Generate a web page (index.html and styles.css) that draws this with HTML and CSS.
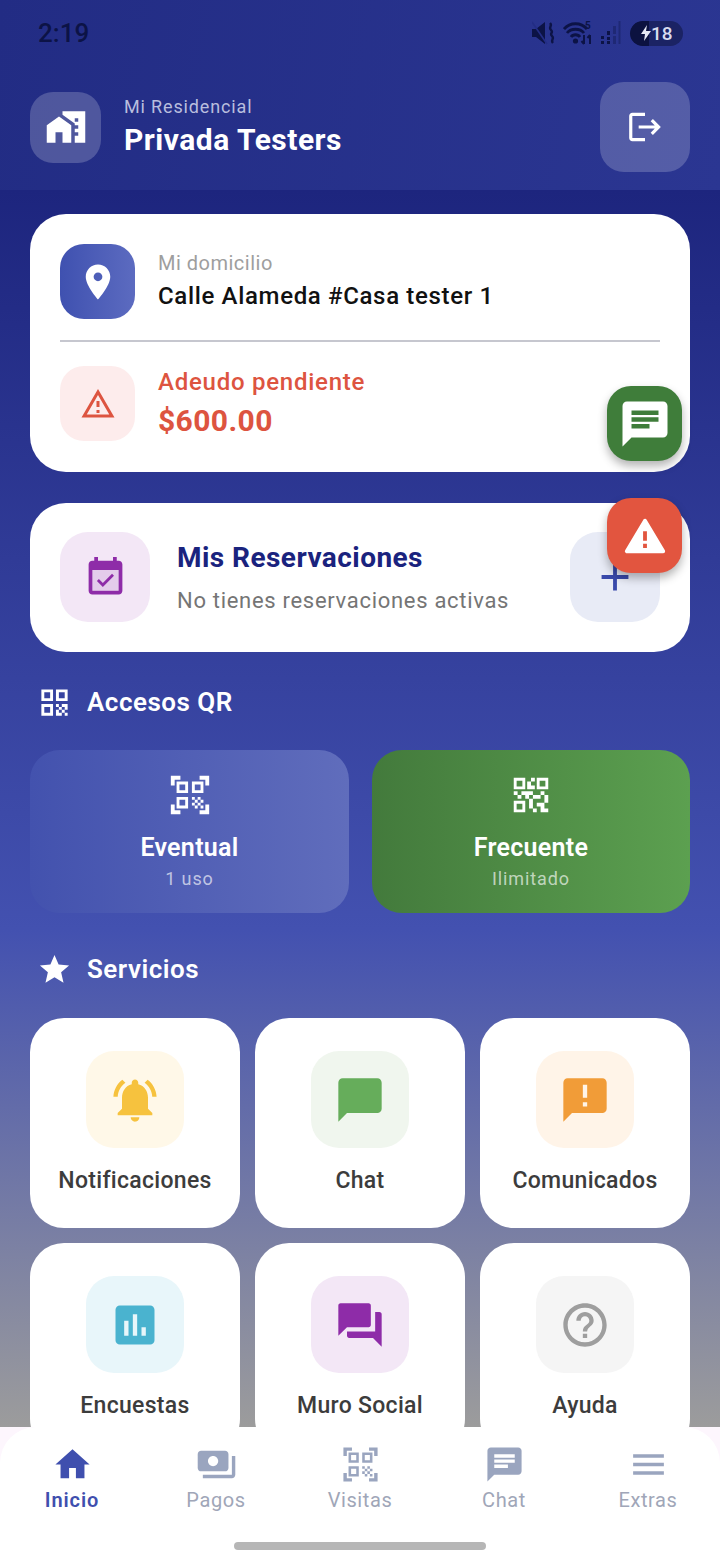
FILE: index.html
```html
<!DOCTYPE html>
<html lang="es">
<head>
<meta charset="UTF-8">
<meta name="viewport" content="width=device-width, initial-scale=1.0">
<title>Mi Residencial</title>
<link rel="stylesheet" href="styles.css">
</head>
<body>

<div class="app">

<header class="top">
  <div class="statusbar">
    <span class="clock">2:19</span>
    <div class="status-icons">
      <svg class="st-mute" viewBox="0 0 25 24"><path d="M0 8h4l9-7v22l-9-7H0z"/><path d="M0 1l15 22" stroke="#232d85" stroke-width="1.600"/><path d="M18 2c3 3-2 4 1 7s-2 3 1 6-2 4 1 7" fill="none" stroke="#0c1346" stroke-width="2.400"/></svg>
      <svg class="st-wifi" viewBox="0 0 29 24"><path d="M1 8c6-7 17-7 23 0M4 12c4-5 13-5 17 0M8 16c2-3 7-3 9 0" fill="none" stroke="#0c1346" stroke-width="2.800"/><circle cx="12.500" cy="20" r="2.600" fill="#0c1346"/><path d="M21 14v9M18.500 20l2.500 3M27 23v-9M24.500 17l2.500-3" fill="none" stroke="#0c1346" stroke-width="2"/></svg>
      <span class="st-five">5</span>
      <svg class="st-signal" viewBox="0 0 21 24"><path d="M1 15h3v3H1zM1 20h3v3H1zM7 10h3v4H7zM7 16h3v3H7zM7 20h3v3H7z"/><path class="dim" d="M13 5h3v8h-3zM13 15h3v8h-3zM18.500 0h2v23h-2z"/></svg>
      <div class="battery"><span class="bat-cap"><svg viewBox="0 0 12 18"><path d="M7 1L1 10h4l-1 7 7-10H6z"/></svg></span><span>18</span></div>
    </div>
  </div>
  <div class="top-row">
    <div class="top-left">
      <div class="logo-box">
        <svg class="ic-42" viewBox="0 0 24 24"><path d="M1 11v10h5v-6h4v6h5V11L8 6z"/><path d="M10 3v1.970l7 5V11h2v2h-2v2h2v2h-2v4h6V3H10zm9 6h-2V7h2v2z"/></svg>
      </div>
      <div>
        <div class="top-small">Mi Residencial</div>
        <div class="top-name">Privada Testers</div>
      </div>
    </div>
    <button class="logout">
      <svg class="ic-38" viewBox="0 0 24 24"><path d="M17 7l-1.410 1.410L18.170 11H8v2h10.170l-2.580 2.580L17 17l5-5zM4 5h8V3H4c-1.100 0-2 .9-2 2v14c0 1.100.9 2 2 2h8v-2H4V5z"/></svg>
    </button>
  </div>
</header>

<main class="content">

  <section class="card home-card">
    <div class="home-row">
      <div class="box-75 box-blue">
        <svg class="ic-42 white" viewBox="0 0 24 24"><path d="M12 2C8.130 2 5 5.130 5 9c0 5.250 7 13 7 13s7-7.750 7-13c0-3.870-3.130-7-7-7zm0 9.500a2.500 2.500 0 0 1 0-5 2.500 2.500 0 0 1 0 5z"/></svg>
      </div>
      <div>
        <div class="label-grey">Mi domicilio</div>
        <div class="address">Calle Alameda #Casa tester 1</div>
      </div>
    </div>
    <div class="divider"></div>
    <div class="home-row">
      <div class="box-75 box-red">
        <svg class="ic-36" viewBox="0 0 24 24"><path d="M12 5.990L19.530 19H4.470L12 5.990M12 2L1 21h22L12 2zm1 14h-2v2h2v-2zm0-6h-2v4h2v-4z"/></svg>
      </div>
      <div>
        <div class="debt-label">Adeudo pendiente</div>
        <div class="debt-amount">$600.00</div>
      </div>
    </div>
  </section>

  <section class="card booking-card">
    <div class="box-90 box-purple">
      <svg class="ic-45" viewBox="0 0 24 24"><path fill-rule="evenodd" d="M19 3h-1V1h-2v2H8V1H6v2H5c-1.110 0-2 .9-2 2v14c0 1.100.89 2 2 2h14c1.100 0 2-.9 2-2V5c0-1.100-.9-2-2-2zm0 16H5V8h14v11z"/><path d="M5 8h14v11H5z" opacity=".14"/><path d="M16.530 11.060L15.470 10l-4.880 4.880-2.120-2.120-1.060 1.060 3.180 3.180z"/></svg>
    </div>
    <div class="booking-text">
      <div class="booking-title">Mis Reservaciones</div>
      <div class="booking-sub">No tienes reservaciones activas</div>
    </div>
    <div class="box-90 box-add">
      <svg class="ic-46" viewBox="0 0 24 24"><path d="M19 13h-6v6h-2v-6H5v-2h6V5h2v6h6v2z"/></svg>
    </div>
  </section>

  <h2 class="section-title title-qr">
    <svg class="ic-35" viewBox="0 0 24 24"><path d="M3 11h8V3H3v8zm2-6h4v4H5V5zM3 21h8v-8H3v8zm2-6h4v4H5v-4zM13 3v8h8V3h-8zm6 6h-4V5h4v4zM13 13h2v2h-2zM15 15h2v2h-2zM13 17h2v2h-2zM17 13h2v2h-2zM19 15h2v2h-2zM15 19h2v2h-2zM17 17h2v2h-2zM19 19h2v2h-2zM13 19h2v2h-2zM19 13h2v2h-2z"/></svg>
    Accesos QR
  </h2>

  <div class="qr-row">
    <div class="qr-card qr-blue">
      <svg class="ic-46" viewBox="0 0 24 24"><path d="M9.500 6.500v3h-3v-3h3M11 5H5v6h6V5zm-1.500 9.500v3h-3v-3h3M11 13H5v6h6v-6zm6.500-6.500v3h-3v-3h3M19 5h-6v6h6V5zm-6 8h1.500v1.500H13V13zm1.500 1.500H16V16h-1.500v-1.500zM16 13h1.500v1.500H16V13zm-3 3h1.500v1.500H13V16zm1.500 1.500H16V19h-1.500v-1.500zM16 16h1.500v1.500H16V16zm1.500-1.500H19V16h-1.500v-1.500zm0 3H19V19h-1.500v-1.500zM22 7h-2V4h-3V2h5v5zm0 15v-5h-2v3h-3v2h5zM2 22h5v-2H4v-3H2v5zM2 2v5h2V4h3V2H2z"/></svg>
      <div class="qr-title">Eventual</div>
      <div class="qr-sub">1 uso</div>
    </div>
    <div class="qr-card qr-green">
      <svg class="ic-46" viewBox="0 0 24 24"><path fill-rule="evenodd" d="M15 21h-2v-2h2v2zm-2-7h-2v5h2v-5zm8-2h-2v4h2v-4zm-2-2h-2v2h2v-2zM7 12H5v2h2v-2zm-2-2H3v2h2v-2zm7-5h2V3h-2v2zM9 9H3V3h6v6zM4.500 4.500v3h3v-3h-3zM9 21H3v-6h6v6zm-4.500-4.500v3h3v-3h-3zM21 9h-6V3h6v6zm-4.500-4.500v3h3v-3h-3zM19 19v-3h-4v2h2v3h4v-2h-2zm-2-7h-4v2h4v-2zm-4-2H7v2h2v2h2v-2h2v-2zm1-1V7h-2V5h-2v4h4z"/></svg>
      <div class="qr-title">Frecuente</div>
      <div class="qr-sub">Ilimitado</div>
    </div>
  </div>

  <h2 class="section-title title-services">
    <svg class="ic-35" viewBox="0 0 24 24"><path d="M12 17.270L18.180 21l-1.640-7.030L22 9.240l-7.190-.61L12 2 9.190 8.630 2 9.240l5.460 4.730L5.820 21z"/></svg>
    Servicios
  </h2>

  <div class="services">
    <div class="service">
      <div class="service-box tint-yellow"><svg viewBox="0 0 24 24"><path d="M7.580 4.080L6.150 2.650C3.750 4.480 2.170 7.300 2.030 10.500h2c.15-2.650 1.510-4.970 3.550-6.420zm12.390 6.420h2c-.15-3.200-1.730-6.020-4.120-7.850l-1.420 1.430c2.020 1.450 3.390 3.770 3.540 6.420zM18 11c0-3.070-1.640-5.640-4.500-6.320V4c0-.83-.67-1.500-1.500-1.500s-1.500.67-1.500 1.500v.68C7.630 5.360 6 7.920 6 11v5l-2 2v1h16v-1l-2-2v-5zm-6 11c.14 0 .27-.01.4-.04.65-.14 1.180-.58 1.440-1.180.1-.24.15-.5.15-.78h-4c.01 1.100.9 2 2.010 2z"/></svg></div>
      <div class="service-name">Notificaciones</div>
    </div>
    <div class="service">
      <div class="service-box tint-green"><svg viewBox="0 0 24 24"><path d="M20 2H4c-1.100 0-2 .9-2 2v18l4-4h14c1.100 0 2-.9 2-2V4c0-1.100-.9-2-2-2z"/></svg></div>
      <div class="service-name">Chat</div>
    </div>
    <div class="service">
      <div class="service-box tint-orange"><svg viewBox="0 0 24 24"><path d="M20 2H4c-1.100 0-1.990.9-1.990 2L2 22l4-4h14c1.100 0 2-.9 2-2V4c0-1.100-.9-2-2-2zm-7 9h-2V5h2v6zm0 4h-2v-2h2v2z"/></svg></div>
      <div class="service-name">Comunicados</div>
    </div>
    <div class="service">
      <div class="service-box tint-cyan"><svg viewBox="0 0 24 24"><path d="M19 3H5c-1.100 0-2 .9-2 2v14c0 1.100.9 2 2 2h14c1.100 0 2-.9 2-2V5c0-1.100-.9-2-2-2zM9 17H7v-7h2v7zm4 0h-2V7h2v10zm4 0h-2v-4h2v4z"/></svg></div>
      <div class="service-name">Encuestas</div>
    </div>
    <div class="service">
      <div class="service-box tint-purple"><svg viewBox="0 0 24 24"><path d="M21 6h-2v9H6v2c0 .55.45 1 1 1h11l4 4V7c0-.55-.45-1-1-1zm-4 6V3c0-.55-.45-1-1-1H3c-.55 0-1 .45-1 1v14l4-4h10c.55 0 1-.45 1-1z"/></svg></div>
      <div class="service-name">Muro Social</div>
    </div>
    <div class="service">
      <div class="service-box tint-grey"><svg viewBox="0 0 24 24"><path d="M11 18h2v-2h-2v2zm1-16C6.480 2 2 6.480 2 12s4.480 10 10 10 10-4.480 10-10S17.520 2 12 2zm0 18c-4.410 0-8-3.590-8-8s3.590-8 8-8 8 3.590 8 8-3.590 8-8 8zm0-14c-2.210 0-4 1.790-4 4h2c0-1.100.9-2 2-2s2 .9 2 2c0 2-3 1.750-3 5h2c0-2.250 3-2.500 3-5 0-2.210-1.790-4-4-4z"/></svg></div>
      <div class="service-name">Ayuda</div>
    </div>
  </div>

</main>

<nav class="bottom-nav">
  <div class="nav-items">
    <div class="nav-item active">
      <svg viewBox="0 0 24 24"><path d="M10 20v-6h4v6h5v-8h3L12 3 2 12h3v8z"/></svg>
      <span>Inicio</span>
    </div>
    <div class="nav-item">
      <svg viewBox="0 0 24 24"><path d="M19 14V6c0-1.100-.9-2-2-2H3c-1.100 0-2 .9-2 2v8c0 1.100.9 2 2 2h14c1.100 0 2-.9 2-2zm-9-1c-1.660 0-3-1.340-3-3s1.340-3 3-3 3 1.340 3 3-1.340 3-3 3zm13-6v11c0 1.100-.9 2-2 2H4v-2h17V7h2z"/></svg>
      <span>Pagos</span>
    </div>
    <div class="nav-item">
      <svg viewBox="0 0 24 24"><path d="M9.500 6.500v3h-3v-3h3M11 5H5v6h6V5zm-1.500 9.500v3h-3v-3h3M11 13H5v6h6v-6zm6.500-6.500v3h-3v-3h3M19 5h-6v6h6V5zm-6 8h1.500v1.500H13V13zm1.500 1.500H16V16h-1.500v-1.500zM16 13h1.500v1.500H16V13zm-3 3h1.500v1.500H13V16zm1.500 1.500H16V19h-1.500v-1.500zM16 16h1.500v1.500H16V16zm1.500-1.500H19V16h-1.500v-1.500zm0 3H19V19h-1.500v-1.500zM22 7h-2V4h-3V2h5v5zm0 15v-5h-2v3h-3v2h5zM2 22h5v-2H4v-3H2v5zM2 2v5h2V4h3V2H2z"/></svg>
      <span>Visitas</span>
    </div>
    <div class="nav-item">
      <svg viewBox="0 0 24 24"><path d="M20 2H4c-1.100 0-1.990.9-1.990 2L2 22l4-4h14c1.100 0 2-.9 2-2V4c0-1.100-.9-2-2-2zM6 9h12v2H6V9zm8 5H6v-2h8v2zm4-6H6V6h12v2z"/></svg>
      <span>Chat</span>
    </div>
    <div class="nav-item">
      <svg viewBox="0 0 24 24"><path d="M3 18h18v-2H3v2zm0-5h18v-2H3v2zm0-7v2h18V6H3z"/></svg>
      <span>Extras</span>
    </div>
  </div>
  <div class="home-bar"></div>
</nav>

<!-- floating buttons sit over the cards -->
<button class="fab fab-chat">
  <svg viewBox="0 0 24 24"><path d="M20 2H4c-1.100 0-1.990.9-1.990 2L2 22l4-4h14c1.100 0 2-.9 2-2V4c0-1.100-.9-2-2-2zM6 9h12v2H6V9zm8 5H6v-2h8v2zm4-6H6V6h12v2z"/></svg>
</button>
<button class="fab fab-alert">
  <svg viewBox="0 0 24 24"><path stroke="#fff" stroke-width="2" stroke-linejoin="round" d="M2.500 20h19L12 4z"/><path fill="#e2553f" d="M11 9.500h2v5h-2zM11 16h2v2.200h-2z"/></svg>
</button>

</div>

</body>
</html>
```

FILE: styles.css
```css
* {
  box-sizing: border-box;
}

body {
  margin: 0;
  font-family: Roboto, "Noto Sans", sans-serif;
  background: #fff;
}

svg {
  display: block;
  fill: currentColor;
}

.app {
  position: relative;
  width: 720px;
  height: 1560px;
  display: flex;
  flex-direction: column;
  overflow: hidden;
}

/* header */
.top {
  height: 190px;
  flex: none;
  background: linear-gradient(100deg, #222c84, #2b3692);
  color: #fff;
}

.statusbar {
  height: 66px;
  padding: 16px 37px 0 38px;
  display: flex;
  justify-content: space-between;
  align-items: flex-start;
  color: #0c1346;
}

.clock {
  font-size: 26px;
  line-height: 34px;
  font-weight: 500;
}

.status-icons {
  display: flex;
  align-items: center;
  height: 34px;
}

.st-mute {
  width: 25px;
  height: 24px;
  margin-right: 6px;
}

.st-wifi {
  width: 29px;
  height: 24px;
}

.st-five {
  font-size: 10px;
  font-weight: 700;
  width: 7px;
  margin: -15px 0 0 -7px;
}

.st-signal {
  width: 21px;
  height: 24px;
  margin: 0 9px 0 8px;
}

.st-signal .dim {
  opacity: .35;
}

.battery {
  width: 53px;
  height: 25px;
  border-radius: 13px;
  background: #1b2364;
  color: #d8dbee;
  font-size: 19px;
  font-weight: 500;
  display: flex;
  align-items: center;
  overflow: hidden;
}

.bat-cap {
  width: 19px;
  height: 25px;
  margin-right: 2px;
  background: #0c1240;
  border-radius: 13px 0 0 13px;
  display: flex;
  align-items: center;
  justify-content: flex-end;
}

.bat-cap svg {
  width: 12px;
  height: 18px;
  margin-right: -3px;
  color: #e6e8f5;
}

.top-row {
  padding: 16px 30px 0;
  display: flex;
  justify-content: space-between;
  align-items: center;
}

.top-left {
  display: flex;
  align-items: center;
  gap: 23px;
}

.logo-box {
  width: 71px;
  height: 71px;
  border-radius: 23px;
  background: rgba(255, 255, 255, .2);
  display: flex;
  align-items: center;
  justify-content: center;
}

.top-small {
  margin-top: 2px;
  font-size: 18px;
  line-height: 24px;
  letter-spacing: .85px;
  color: #b9bede;
}

.top-name {
  font-size: 30px;
  line-height: 42px;
  font-weight: 700;
  letter-spacing: .5px;
}

.logout {
  width: 90px;
  height: 90px;
  padding: 0;
  border: none;
  border-radius: 24px;
  background: rgba(255, 255, 255, .2);
  color: #fff;
  display: flex;
  align-items: center;
  justify-content: center;
}

.ic-35 { width: 35px; height: 35px; flex: none; }
.ic-36 { width: 36px; height: 36px; flex: none; }
.ic-38 { width: 38px; height: 38px; flex: none; }
.ic-42 { width: 42px; height: 42px; flex: none; }
.ic-45 { width: 45px; height: 45px; flex: none; }
.ic-46 { width: 46px; height: 46px; flex: none; }

/* page body */
.content {
  flex: 1;
  min-height: 0;
  overflow: hidden;
  padding: 24px 30px 0;
  background: linear-gradient(180deg, #1d257e 0, #4351b0 740px, #9c9c9c 1237px);
}

.card {
  background: #fff;
  border-radius: 36px;
}

.home-card {
  height: 258px;
  padding: 30px;
}

.home-row {
  display: flex;
  align-items: center;
  gap: 23px;
}

.box-75 {
  width: 75px;
  height: 75px;
  flex: none;
  border-radius: 24px;
  display: flex;
  align-items: center;
  justify-content: center;
}

.box-90 {
  width: 90px;
  height: 90px;
  flex: none;
  border-radius: 28px;
  display: flex;
  align-items: center;
  justify-content: center;
}

.box-blue {
  background: linear-gradient(90deg, #3f51b0, #5c6bc0);
  color: #fff;
}

.box-red {
  background: #fdecec;
  color: #dd5440;
}

.box-purple {
  background: #f3e7f6;
  color: #8e2ca8;
}

.box-add {
  background: #e8ebf6;
  color: #3949ab;
}

.label-grey {
  font-size: 20px;
  line-height: 24px;
  letter-spacing: .5px;
  color: #9e9e9e;
}

.address {
  margin-top: 5px;
  font-size: 24px;
  line-height: 32px;
  font-weight: 500;
  letter-spacing: .66px;
  color: #111;
}

.divider {
  height: 2px;
  margin: 21px 0 24px;
  background: #c6c7cf;
}

.debt-label {
  font-size: 24px;
  line-height: 28px;
  font-weight: 500;
  letter-spacing: .75px;
  color: #dd5440;
}

.debt-amount {
  margin-top: 6px;
  font-size: 30px;
  line-height: 38px;
  font-weight: 700;
  letter-spacing: .4px;
  color: #dd5440;
}

.booking-card {
  height: 149px;
  margin-top: 31px;
  padding: 0 30px 1px;
  display: flex;
  align-items: center;
}

.booking-text {
  flex: 1;
  padding-left: 27px;
}

.booking-title {
  font-size: 28px;
  line-height: 36px;
  font-weight: 700;
  letter-spacing: .45px;
  color: #1a237e;
}

.booking-sub {
  margin-top: 11px;
  font-size: 22px;
  line-height: 28px;
  letter-spacing: .7px;
  color: #757575;
}

.section-title {
  margin: 0;
  padding-left: 7px;
  height: 36px;
  display: flex;
  align-items: center;
  gap: 15px;
  font-size: 26px;
  font-weight: 600;
  letter-spacing: .5px;
  color: #fff;
}

.title-qr {
  margin-top: 32px;
  margin-bottom: 30px;
}

.title-services {
  margin-top: 38px;
  margin-bottom: 31px;
}

.qr-row {
  display: grid;
  grid-template-columns: 319px 318px;
  gap: 23px;
}

.qr-card {
  height: 163px;
  padding-top: 22px;
  border-radius: 30px;
  color: #fff;
  display: flex;
  flex-direction: column;
  align-items: center;
}

.qr-blue {
  background: linear-gradient(90deg, #4352ae, #606dbc);
}

.qr-green {
  background: linear-gradient(90deg, #437a3c, #5ca050);
}

.qr-title {
  margin-top: 13px;
  font-size: 25px;
  line-height: 34px;
  font-weight: 600;
  letter-spacing: .3px;
}

.qr-sub {
  margin-top: 2px;
  font-size: 18px;
  line-height: 24px;
  letter-spacing: .9px;
  color: rgba(255, 255, 255, .65);
}

.services {
  display: grid;
  grid-template-columns: repeat(3, 210px);
  grid-auto-rows: 210px;
  gap: 15px;
}

.service {
  background: #fff;
  border-radius: 34px;
  padding-top: 33px;
  display: flex;
  flex-direction: column;
  align-items: center;
}

.service-box {
  width: 98px;
  height: 97px;
  border-radius: 28px;
  display: flex;
  align-items: center;
  justify-content: center;
}

.service-box svg {
  width: 52px;
  height: 52px;
}

.tint-yellow { background: #fff8e8; color: #f6c23e; }
.tint-green { background: #f0f6ee; color: #66ad5b; }
.tint-orange { background: #fff4e8; color: #f19c38; }
.tint-cyan { background: #e8f6fa; color: #4ab3cf; }
.tint-purple { background: #f3e7f6; color: #8e2ca8; }
.tint-grey { background: #f5f5f5; color: #9e9e9e; }

.service-name {
  margin-top: 17px;
  font-size: 23px;
  line-height: 32px;
  font-weight: 500;
  letter-spacing: .3px;
  color: #3c3c3c;
}

/* bottom bar */
.bottom-nav {
  height: 133px;
  flex: none;
  background: #fff;
  position: relative;
}

.bottom-nav::before {
  content: "";
  position: absolute;
  inset: 0 0 auto 0;
  height: 40px;
  background: #fdf6fd;
  z-index: 0;
}

.bottom-nav::after {
  content: "";
  position: absolute;
  inset: 0 0 auto 0;
  height: 40px;
  background: #fff;
  border-radius: 36px 36px 0 0;
  z-index: 0;
}

.nav-items {
  position: relative;
  z-index: 1;
  display: grid;
  grid-template-columns: repeat(5, 144px);
  padding-top: 17px;
}

.nav-item {
  display: flex;
  flex-direction: column;
  align-items: center;
  color: #9aa5bf;
  font-size: 20px;
  line-height: 28px;
  letter-spacing: .6px;
}

.nav-item span {
  margin-top: 1px;
  color: #a0a6b8;
}

.nav-item svg {
  width: 41px;
  height: 41px;
}

.nav-item.active {
  color: #3f4fae;
  font-weight: 600;
  letter-spacing: .9px;
}

.nav-item.active span {
  color: #3f4fae;
}

.home-bar {
  position: absolute;
  left: 234px;
  top: 115px;
  width: 252px;
  height: 8px;
  border-radius: 4px;
  background: #b6b6b6;
  z-index: 1;
}

/* floating buttons */
.fab {
  position: absolute;
  left: 607px;
  width: 75px;
  height: 75px;
  padding: 0;
  border: none;
  border-radius: 24px;
  color: #fff;
  box-shadow: 0 5px 10px rgba(0, 0, 0, .3);
  display: flex;
  align-items: center;
  justify-content: center;
}

.fab-chat {
  top: 386px;
  background: #3f7d3a;
}

.fab-chat svg {
  width: 54px;
  height: 54px;
}

.fab-alert {
  top: 498px;
  background: #e2553f;
}

.fab-alert svg {
  width: 46px;
  height: 46px;
}
```
